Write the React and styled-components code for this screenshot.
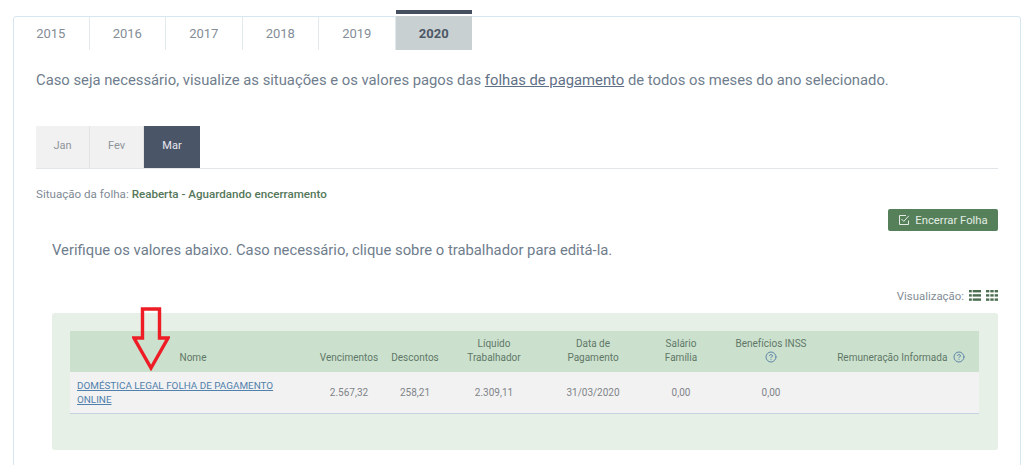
import React from 'react';
import styled, { createGlobalStyle } from 'styled-components';
import { CircleHelp, SquareCheck } from 'lucide-react';

const YEARS = ['2015', '2016', '2017', '2018', '2019', '2020'];
const MONTHS = ['Jan', 'Fev', 'Mar'];
const COLUMNS = [246, 66, 66, 92, 106, 70, 110, 153];

export default function App() {
	return (
		<Page>
			<GlobalStyle />
			<Panel>
				<YearTabs>
					{YEARS.map((year) => (
						<YearTab key={year} $active={year === '2020'}>
							{year}
						</YearTab>
					))}
				</YearTabs>
				<Content>
					<Intro>
						Caso seja necessário, visualize as situações e os valores pagos das{' '}
						<IntroLink>folhas de pagamento</IntroLink> de todos os meses do ano
						selecionado.
					</Intro>
					<MonthTabs>
						{MONTHS.map((month) => (
							<MonthTab key={month} $active={month === 'Mar'}>
								{month}
							</MonthTab>
						))}
					</MonthTabs>
					<Status>
						Situação da folha: <StatusValue>Reaberta - Aguardando encerramento</StatusValue>
					</Status>
					<Actions>
						<CloseButton>
							<CheckIcon viewBox="0 0 12 12">
								<path d="M10.5 6.5 V10.5 H1.5 V1.5 H8" />
								<path d="M3.5 5 L5.8 7.4 L10.8 1.8" />
							</CheckIcon>
							Encerrar Folha
						</CloseButton>
					</Actions>
					<Hint>Verifique os valores abaixo. Caso necessário, clique sobre o trabalhador para editá-la.</Hint>
					<ViewRow>
						Visualização:
						<ViewIcon viewBox="0 0 13 11" preserveAspectRatio="none">
							<rect x="0" y="0" width="3" height="2.4" />
							<rect x="4" y="0" width="9" height="2.4" />
							<rect x="0" y="4.2" width="3" height="2.4" />
							<rect x="4" y="4.2" width="9" height="2.4" />
							<rect x="0" y="8.4" width="3" height="2.4" />
							<rect x="4" y="8.4" width="9" height="2.4" />
						</ViewIcon>
						<ViewIcon viewBox="0 0 13 11" preserveAspectRatio="none">
							<rect x="0" y="0" width="3.6" height="2.4" />
							<rect x="4.7" y="0" width="3.6" height="2.4" />
							<rect x="9.4" y="0" width="3.6" height="2.4" />
							<rect x="0" y="4.2" width="3.6" height="2.4" />
							<rect x="4.7" y="4.2" width="3.6" height="2.4" />
							<rect x="9.4" y="4.2" width="3.6" height="2.4" />
							<rect x="0" y="8.4" width="3.6" height="2.4" />
							<rect x="4.7" y="8.4" width="3.6" height="2.4" />
							<rect x="9.4" y="8.4" width="3.6" height="2.4" />
						</ViewIcon>
					</ViewRow>
					<TableCard>
						<Arrow viewBox="0 0 38 64">
							<path d="M10.5 2 H27.5 V31 H36 L19 61 L2 31 H10.5 Z" />
						</Arrow>
						<Table>
							<colgroup>
								{COLUMNS.map((width, index) => (
									<col key={index} width={width} />
								))}
							</colgroup>
							<thead>
								<tr>
									<HeadCell>Nome</HeadCell>
									<HeadCell>Vencimentos</HeadCell>
									<HeadCell>Descontos</HeadCell>
									<HeadCell>Líquido<br />Trabalhador</HeadCell>
									<HeadCell>Data de<br />Pagamento</HeadCell>
									<HeadCell>Salário<br />Família</HeadCell>
									<HeadCell>
										Benefícios INSS<br />
										<HelpIcon size={12} />
									</HeadCell>
									<HeadCell>
										Remuneração Informada <HelpIcon size={12} $gap />
									</HeadCell>
								</tr>
							</thead>
							<tbody>
								<tr>
									<NameCell><WorkerLink>DOMÉSTICA LEGAL FOLHA DE PAGAMENTO ONLINE</WorkerLink></NameCell>
									<BodyCell>2.567,32</BodyCell>
									<BodyCell>258,21</BodyCell>
									<BodyCell>2.309,11</BodyCell>
									<BodyCell>31/03/2020</BodyCell>
									<BodyCell>0,00</BodyCell>
									<BodyCell>0,00</BodyCell>
									<BodyCell />
								</tr>
							</tbody>
						</Table>
					</TableCard>
				</Content>
			</Panel>
		</Page>
	);
}

const GlobalStyle = createGlobalStyle`
	html, body {
		margin: 0;
		background: #ffffff;
		overflow: hidden;
	}
	body {
		font-family: Roboto, "Liberation Sans", sans-serif;
	}
`;

const Page = styled.div`
	height: 465px;
	padding: 16px 3px 0 13px;
	box-sizing: border-box;
	overflow: hidden;
`;

const Panel = styled.div`
	height: 460px;
	border: 1px solid #d6e6f0;
	border-radius: 3px 3px 0 0;
	box-sizing: border-box;
`;

const YearTabs = styled.div`
	display: flex;
	height: 34px;
	margin: -1px 0 0 -1px;
`;

const YearTab = styled.div`
	position: relative;
	width: 76.5px;
	display: flex;
	align-items: center;
	justify-content: center;
	box-sizing: border-box;
	font-size: 13px;
	font-weight: ${(p) => (p.$active ? 700 : 400)};
	color: ${(p) => (p.$active ? '#4d5866' : '#848d97')};
	background: ${(p) => (p.$active ? '#c9d0d2' : 'transparent')};
	border-right: ${(p) => (p.$active ? 'none' : '1px solid #e2e9ed')};

	&::before {
		content: '';
		display: ${(p) => (p.$active ? 'block' : 'none')};
		position: absolute;
		left: 0;
		right: 0;
		top: -6px;
		height: 4px;
		background: #454f60;
	}
`;

const Content = styled.div`
	padding: 0 22px;
`;

const Intro = styled.p`
	margin: 20px 0 0;
	font-size: 14.8px;
	line-height: 20px;
	color: #6f7d8d;
	white-space: nowrap;
`;

const IntroLink = styled.span`
	text-decoration: underline;
	color: #5f7086;
`;

const MonthTabs = styled.div`
	display: flex;
	height: 42px;
	margin-top: 36px;
	border-bottom: 1px solid #e3e6e8;
`;

const MonthTab = styled.div`
	display: flex;
	align-items: center;
	justify-content: center;
	box-sizing: border-box;
	width: ${(p) => (p.$active ? '56px' : '54px')};
	padding-bottom: 3px;
	font-size: 11px;
	color: ${(p) => (p.$active ? '#e8eaee' : '#8f9499')};
	background: ${(p) => (p.$active ? '#4a5568' : '#f1f1f1')};
	border-right: ${(p) => (p.$active ? 'none' : '1px solid #e2e4e4')};
`;

const Status = styled.div`
	margin-top: 18px;
	font-size: 11.6px;
	line-height: 14px;
	color: #7f8a95;
`;

const StatusValue = styled.span`
	color: #55775a;
	font-weight: 500;
`;

const Actions = styled.div`
	display: flex;
	justify-content: flex-end;
	margin-top: 8px;
`;

const CloseButton = styled.button`
	display: flex;
	align-items: center;
	justify-content: center;
	gap: 5px;
	width: 110px;
	height: 22px;
	padding: 0;
	border: none;
	border-radius: 2px;
	background: #558059;
	color: #e4ede5;
	font-family: inherit;
	font-size: 11.3px;
`;

const CheckIcon = styled.svg`
	width: 12px;
	height: 12px;
	fill: none;
	stroke: #e4ede5;
	stroke-width: 1;
`;

const Hint = styled.p`
	margin: 10px 0 0 16px;
	font-size: 14.8px;
	line-height: 18px;
	color: #6f7d8d;
`;

const ViewRow = styled.div`
	display: flex;
	justify-content: flex-end;
	align-items: center;
	gap: 4px;
	margin-top: 29px;
	height: 16px;
	font-size: 11.4px;
	color: #838d95;
`;

const ViewIcon = styled.svg`
	width: 12px;
	height: 11px;
	margin-left: 1px;
	margin-bottom: 2px;
	fill: #4c6e50;
`;

const TableCard = styled.div`
	position: relative;
	height: 137px;
	margin: 9px 0 0 16px;
	padding: 18px 19px 0 18px;
	box-sizing: border-box;
	border-radius: 3px;
	background: #e6f0e7;
`;

const Arrow = styled.svg`
	position: absolute;
	left: 80px;
	top: -6px;
	width: 38px;
	height: 64px;
	fill: none;
	stroke: #ee1c25;
	stroke-width: 3.4;
`;

const Table = styled.table`
	width: 100%;
	table-layout: fixed;
	border-collapse: collapse;
`;

const HeadCell = styled.th`
	height: 41px;
	padding: 0 2px 7px;
	box-sizing: border-box;
	vertical-align: bottom;
	background: #cbe1ce;
	color: #617766;
	font-size: 10px;
	font-weight: 400;
	line-height: 14px;
	text-align: center;

	&:last-child {
		padding-right: 5px;
	}
`;

const HelpIcon = styled(CircleHelp)`
	color: #5f86a8;
	vertical-align: -2px;
	margin-left: ${(p) => (p.$gap ? '3px' : '0')};
`;

const BodyCell = styled.td`
	height: 41px;
	padding: 0 2px;
	box-sizing: border-box;
	background: #f2f2f2;
	border-bottom: 1px solid #c5d3e0;
	color: #7f8489;
	font-size: 10px;
	text-align: center;
`;

const NameCell = styled(BodyCell)`
	padding: 1px 30px 0 7px;
	line-height: 14px;
	text-align: left;
`;

const WorkerLink = styled.a`
	color: #5080ac;
	font-size: 9.9px;
	text-decoration: underline;
	cursor: pointer;
`;
